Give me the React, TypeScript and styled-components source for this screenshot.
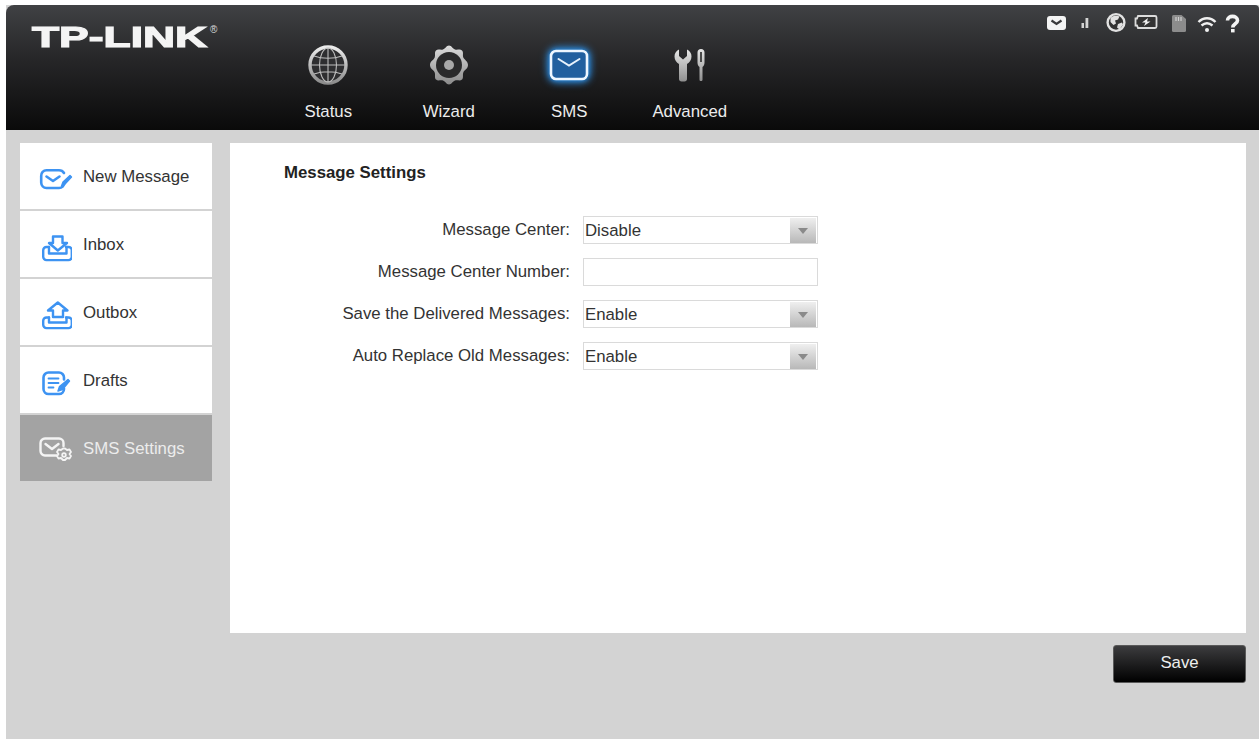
import React from "react";
import styled, { createGlobalStyle } from "styled-components";

const GlobalStyle = createGlobalStyle`
  html, body {
    margin: 0;
    padding: 0;
    background: #fff;
    overflow: hidden;
  }
  body {
    font-family: "Liberation Sans", Arial, sans-serif;
    font-size: 16.8px;
    color: #333;
  }
`;

const navItems = [
  { label: "Status", icon: <GlobeIcon /> },
  { label: "Wizard", icon: <GearIcon /> },
  { label: "SMS", icon: <MailIcon /> },
  { label: "Advanced", icon: <ToolsIcon /> },
];

const menuItems = [
  { label: "New Message", icon: <NewMessageIcon /> },
  { label: "Inbox", icon: <InboxIcon /> },
  { label: "Outbox", icon: <OutboxIcon /> },
  { label: "Drafts", icon: <DraftsIcon /> },
  { label: "SMS Settings", icon: <SettingsIcon />, active: true },
];

const fields = [
  { label: "Message Center:", value: "Disable" },
  { label: "Message Center Number:" },
  { label: "Save the Delivered Messages:", value: "Enable" },
  { label: "Auto Replace Old Messages:", value: "Enable" },
];

const App: React.FC = () => {
  return (
    <Frame>
      <GlobalStyle />
      <Header>
        <Logo>
          <LogoText>TP-LINK</LogoText>
          <LogoMark>®</LogoMark>
        </Logo>
        <Nav>
          {navItems.map((item) => (
            <NavItem key={item.label}>
              <NavIcon>{item.icon}</NavIcon>
              <NavLabel>{item.label}</NavLabel>
            </NavItem>
          ))}
        </Nav>
        <StatusBar>
          <StatusIcons />
        </StatusBar>
      </Header>
      <Body>
        <Sidebar>
          {menuItems.map((item) => (
            <MenuItem key={item.label} $active={item.active}>
              <MenuIcon>{item.icon}</MenuIcon>
              {item.label}
            </MenuItem>
          ))}
        </Sidebar>
        <Main>
          <Panel>
            <Title>Message Settings</Title>
            <Form>
              {fields.map((field) => (
                <Row key={field.label}>
                  <Label>{field.label}</Label>
                  {field.value ? (
                    <Select>
                      {field.value}
                      <Arrow />
                    </Select>
                  ) : (
                    <Input />
                  )}
                </Row>
              ))}
            </Form>
          </Panel>
          <Footer>
            <SaveButton>Save</SaveButton>
          </Footer>
        </Main>
      </Body>
    </Frame>
  );
};

export default App;

function GlobeIcon() {
  return (
    <svg width="40" height="40" viewBox="0 0 40 40">
      <defs>
        <linearGradient id="ring" x1="0" y1="0" x2="0" y2="1">
          <stop offset="0" stopColor="#ececec" />
          <stop offset="1" stopColor="#8c8c8c" />
        </linearGradient>
      </defs>
      <circle cx="20" cy="20" r="18" fill="#2e2e30" stroke="url(#ring)" strokeWidth="3.4" />
      <g fill="none" stroke="#bdbdbd" strokeWidth="1.1">
        <ellipse cx="20" cy="20" rx="8.5" ry="17" />
        <path d="M20 3v34M3 20h34M6 11c8 3 20 3 28 0M6 29c8-3 20-3 28 0" />
      </g>
    </svg>
  );
}

function GearIcon() {
  return (
    <svg width="40" height="40" viewBox="0 0 40 40">
      <defs>
        <linearGradient id="gear" x1="0" y1="0" x2="0" y2="1">
          <stop offset="0" stopColor="#dcdcdc" />
          <stop offset="1" stopColor="#8a8a8a" />
        </linearGradient>
      </defs>
      <path
        d="M20 .5c2.6 0 3.6 3.2 6 4s5-.9 7 .9c1.800 1.900.4 4.700 1.300 7S39 16 39 20s-3.800 5-4.700 7.400.5 5.300-1.300 7.200c-2 1.800-4.600.1-7 .9s-3.400 4-6 4-3.600-3.200-6-4-5 .9-7-.9c-1.800-1.900-.4-4.800-1.300-7.200S1 24 1 20s3.800-5.200 4.700-7.600-.5-5.100 1.300-7c2-1.800 4.600-.1 7-.9s3.400-4 6-4z"
        fill="url(#gear)"
      />
      <circle cx="20" cy="20" r="13" fill="#2a2a2b" />
      <circle cx="20" cy="20" r="5" fill="#a8a8a8" />
    </svg>
  );
}

function MailIcon() {
  return (
    <GlowSvg width="40" height="32" viewBox="0 0 40 32">
      <rect x="2" y="2" width="36" height="28" rx="5" fill="#215f9f" stroke="#eef6ff" strokeWidth="2.6" />
      <path d="M9.500 10l10.500 6.500L30.500 10" fill="none" stroke="#e8f2fc" strokeWidth="2" strokeLinecap="round" />
    </GlowSvg>
  );
}

function ToolsIcon() {
  return (
    <svg width="32" height="34" viewBox="0 0 32 34">
      <defs>
        <linearGradient id="tool" x1="0" y1="0" x2="0" y2="1">
          <stop offset="0" stopColor="#e6e6e6" />
          <stop offset="1" stopColor="#8f8f8f" />
        </linearGradient>
      </defs>
      <path
        d="M5 1.500V8l4 3.500L13 8V1.500c3 1.500 4.500 4 4.500 7 0 3.500-2 6-4.500 7.500v15c0 1.500-1 2.500-2.500 2.500h-3C6 33.500 5 32.500 5 31V16C2.500 14.500.5 12 .5 8.500c0-3 1.500-5.500 4.500-7z"
        fill="url(#tool)"
      />
      <path
        d="M27 1c2.200 0 3.500 1.500 3.500 3.500v10c0 2-.8 3.500-2 4.500v12.500c0 1-.6 1.500-1.500 1.500s-1.500-.5-1.500-1.500V19c-1.200-1-2-2.500-2-4.500v-10C23.500 2.500 24.800 1 27 1z"
        fill="url(#tool)"
      />
      <rect x="26" y="4" width="2" height="10" fill="#4a4a4a" />
    </svg>
  );
}

function NewMessageIcon() {
  return (
    <svg width="36" height="24" viewBox="0 0 36 24" fill="none" stroke="#3d93f2" strokeWidth="2.6" strokeLinecap="round" strokeLinejoin="round">
      <path d="M26.500 15.500V16a5.500 5.500 0 0 1-5.500 5H8.500A5.500 5.500 0 0 1 3.200 15.500V9A5.500 5.500 0 0 1 8.500 3.200H21c2.200 0 4 1 5 2.800" />
      <path d="M8.500 9.500l6.500 4.500 6.500-4.500" />
      <path d="M23.500 19l1.500-4 7-6.500 1.500 1.500-6.500 7z" fill="#3d93f2" strokeWidth="1.4" />
    </svg>
  );
}

function InboxIcon() {
  return (
    <svg width="32" height="30" viewBox="0 0 32 30" fill="none" stroke="#3d93f2" strokeWidth="2.4" strokeLinecap="round" strokeLinejoin="round">
      <path d="M13 4.500h9.500V11H27l-9.200 7.500L9 11h4z" />
      <path d="M9 15H6.500a3.300 3.300 0 0 0-3.300 3.300v6.500a3.300 3.300 0 0 0 3.300 3.300h22a3.300 3.300 0 0 0 3.300-3.300v-6.500a3.300 3.300 0 0 0-3.300-3.300H26" />
      <path d="M9 15v6.500h17.500V15" />
    </svg>
  );
}

function OutboxIcon() {
  return (
    <svg width="32" height="30" viewBox="0 0 32 30" fill="none" stroke="#3d93f2" strokeWidth="2.4" strokeLinecap="round" strokeLinejoin="round">
      <path d="M17.800 2.500L27.500 10.500H23V17h-10v-6.500H8z" />
      <path d="M9 17.500H6.500a3.300 3.300 0 0 0-3.300 3.300v4a3.300 3.300 0 0 0 3.300 3.300h22a3.300 3.300 0 0 0 3.300-3.300v-4a3.300 3.300 0 0 0-3.300-3.300H26" />
      <path d="M9 17.500v5h17.500v-5" />
    </svg>
  );
}

function DraftsIcon() {
  return (
    <svg width="32" height="28" viewBox="0 0 32 28" fill="none" stroke="#3d93f2" strokeWidth="2.6" strokeLinecap="round" strokeLinejoin="round">
      <path d="M24 19.500V20a5 5 0 0 1-5 5H8.500a5 5 0 0 1-5-5V8.500a5 5 0 0 1 5-5H19a5 5 0 0 1 5 5v2" />
      <path d="M8.500 9.500h10M8.500 14h10M8.500 18.500h5" strokeWidth="1.8" />
      <path d="M18 22l1.500-4.500 8.500-7 1.500 1.500-7 8.500z" fill="#3d93f2" strokeWidth="1.4" />
    </svg>
  );
}

function SettingsIcon() {
  return (
    <svg width="36" height="27" viewBox="0 0 36 27" fill="none" stroke="#f4f4f4" strokeWidth="2.4" strokeLinecap="round" strokeLinejoin="round">
      <path d="M19 18.500H7a4.500 4.500 0 0 1-4.500-4.500V6A4.500 4.500 0 0 1 7 1.500h14A4.500 4.500 0 0 1 25.500 6v3" />
      <path d="M7.500 7l6.500 5 6.500-5" />
      <path d="M27 11.500l2 1.500 2.500-.5 1.500 2.500-1.500 2 1.500 2-1.500 2.500-2.500-.5-2 2h-2l-2-2-2.500.5-1.500-2.500 1.500-2-1.500-2 1.500-2.500 2.500.5 2-1.500z" strokeWidth="1.8" />
      <circle cx="26" cy="18" r="1.800" strokeWidth="1.8" />
    </svg>
  );
}

function StatusIcons() {
  return (
    <svg width="194" height="24" viewBox="0 -2 194 24">
      <rect x="0" y="3" width="19" height="14" rx="3" fill="#f4f4f4" />
      <path d="M4.500 7.500l5 3.500 5-3.500" fill="none" stroke="#3a3a3c" strokeWidth="2.2" />
      <rect x="34.500" y="10" width="2.500" height="5" fill="#d4d4d4" />
      <rect x="38.500" y="5" width="2.800" height="10" fill="#d4d4d4" />
      <circle cx="69" cy="9.500" r="8.400" fill="#333" stroke="#e2e2e2" strokeWidth="2.4" />
      <path d="M63.500 5c2-2.400 7-2.600 9-1.500l-1.500 3-3 1 1 3-2.500 1.500-3-3zM71 11l4-1.500 1 2-3.500 5-2.500-2z" fill="#e2e2e2" />
      <path d="M91 3h17a1.500 1.500 0 0 1 1.500 1.500v9a1.500 1.500 0 0 1-1.500 1.500H91l-1-2.500h-1.500v-7H90z" fill="#333" stroke="#dcdcdc" strokeWidth="1.8" />
      <path d="M101 5l-6 4.500h3.500l-1.500 3.500 6.500-4.500h-3.500z" fill="#f0f0f0" />
      <path d="M126.500 2h8l4.500 4v11.500a1.500 1.500 0 0 1-1.500 1.500h-11a1.500 1.500 0 0 1-1.500-1.500v-14a1.500 1.500 0 0 1 1.500-1.500z" fill="#8c8c8c" />
      <path d="M129 4v4M131.500 4v4M134 4v4" stroke="#d0d0d0" strokeWidth="1.2" />
      <path d="M151.500 9c5-5 12-5 17 0M154.500 12.500c3.500-3 7.500-3 11 0" fill="none" stroke="#f0f0f0" strokeWidth="2.4" />
      <circle cx="160" cy="17" r="2" fill="#f0f0f0" />
      <path d="M180.500 7.500c0-5.500 10-5.500 10 0 0 3.500-4.700 3-4.700 7" fill="none" stroke="#f4f4f4" strokeWidth="3.600" />
      <rect x="184" y="16" width="3.600" height="3.400" fill="#f4f4f4" />
    </svg>
  );
}

const Frame = styled.div`
  display: flex;
  flex-direction: column;
  height: 734px;
  margin: 5px 0 0 6px;
  background: #d3d3d3;
`;

const Header = styled.header`
  display: flex;
  align-items: flex-start;
  flex: none;
  height: 125px;
  padding-left: 26px;
  border-radius: 8px 4px 0 0;
  background: linear-gradient(#404144, #28282a 40%, #0a0a0a);
`;

const Logo = styled.div`
  display: flex;
  flex: none;
  align-items: flex-start;
  width: 236px;
  margin-top: 15px;
`;

const LogoText = styled.span`
  display: inline-block;
  width: 119px;
  transform: scaleX(1.48);
  transform-origin: left top;
  font-size: 30px;
  font-weight: 700;
  line-height: 34px;
  color: #f4f4f4;
  -webkit-text-stroke: 1.2px #f4f4f4;
`;

const LogoMark = styled.span`
  margin: 5px 0 0 59px;
  font-size: 10px;
  line-height: 10px;
  color: #ddd;
`;

const Nav = styled.nav`
  display: flex;
  flex: none;
`;

const NavItem = styled.div`
  display: flex;
  flex-direction: column;
  align-items: center;
  width: 120.5px;
`;

const NavIcon = styled.div`
  display: flex;
  align-items: center;
  justify-content: center;
  height: 40px;
  margin-top: 40px;
`;

const GlowSvg = styled.svg`
  filter: drop-shadow(0 0 4px #2b8be0) drop-shadow(0 0 2px #2b8be0);
`;

const NavLabel = styled.span`
  margin-top: 17px;
  line-height: 20px;
  color: #ececec;
`;

const StatusBar = styled.div`
  flex: none;
  margin: 0 0 0 auto;
  padding: 6px 18px 0 0;
`;

const Body = styled.div`
  display: flex;
  flex: 1;
  gap: 18px;
  padding: 13px 13px 0 14px;
`;

const Sidebar = styled.aside`
  display: flex;
  flex: none;
  flex-direction: column;
  gap: 2.4px;
  width: 192px;
`;

const MenuItem = styled.div<{ $active?: boolean }>`
  display: flex;
  align-items: center;
  gap: 9px;
  box-sizing: border-box;
  height: 65.6px;
  padding: 2px 0 0 18px;
  background: ${({ $active }) => ($active ? "#a3a3a3" : "#fff")};
  color: ${({ $active }) => ($active ? "#ececec" : "#333")};
`;

const MenuIcon = styled.span`
  display: flex;
  flex: none;
  align-items: center;
  justify-content: center;
  width: 36px;
  margin-top: 4px;
`;

const Main = styled.main`
  display: flex;
  flex: 1;
  flex-direction: column;
`;

const Panel = styled.section`
  box-sizing: border-box;
  height: 490px;
  padding: 20px 54px;
  background: #fff;
`;

const Title = styled.h2`
  margin: 0;
  font-size: 16.8px;
  font-weight: 700;
  line-height: 20px;
  color: #222;
`;

const Form = styled.div`
  display: flex;
  flex-direction: column;
  gap: 14px;
  margin-top: 33px;
`;

const Row = styled.div`
  display: flex;
  align-items: center;
  gap: 13px;
  height: 28px;
`;

const Label = styled.label`
  width: 286px;
  text-align: right;
  color: #333;
`;

const Select = styled.div`
  position: relative;
  box-sizing: border-box;
  width: 235px;
  height: 28px;
  padding: 1px 0 0 1px;
  border: 1px solid #dadada;
  background: #fff;
  line-height: 26px;
  color: #333;
`;

const Arrow = styled.span`
  position: absolute;
  top: 1px;
  right: 1px;
  width: 26px;
  height: 25px;
  background: linear-gradient(#efefef, #b8b8b8);

  &::after {
    content: "";
    position: absolute;
    top: 10px;
    left: 8px;
    border-style: solid;
    border-width: 6px 5px 0;
    border-color: #8a8a8a transparent transparent;
  }
`;

const Input = styled.input`
  box-sizing: border-box;
  width: 235px;
  height: 28px;
  border: 1px solid #dadada;
  background: #fff;
`;

const Footer = styled.div`
  display: flex;
  justify-content: flex-end;
  padding-top: 12px;
`;

const SaveButton = styled.button`
  box-sizing: border-box;
  width: 133px;
  height: 38px;
  padding: 0 0 3px;
  border: 1px solid #5a5a5a;
  border-radius: 3px;
  background: linear-gradient(#3c3c3e, #1e1e1f 50%, #000);
  font-family: inherit;
  font-size: 16.8px;
  color: #eee;
`;
